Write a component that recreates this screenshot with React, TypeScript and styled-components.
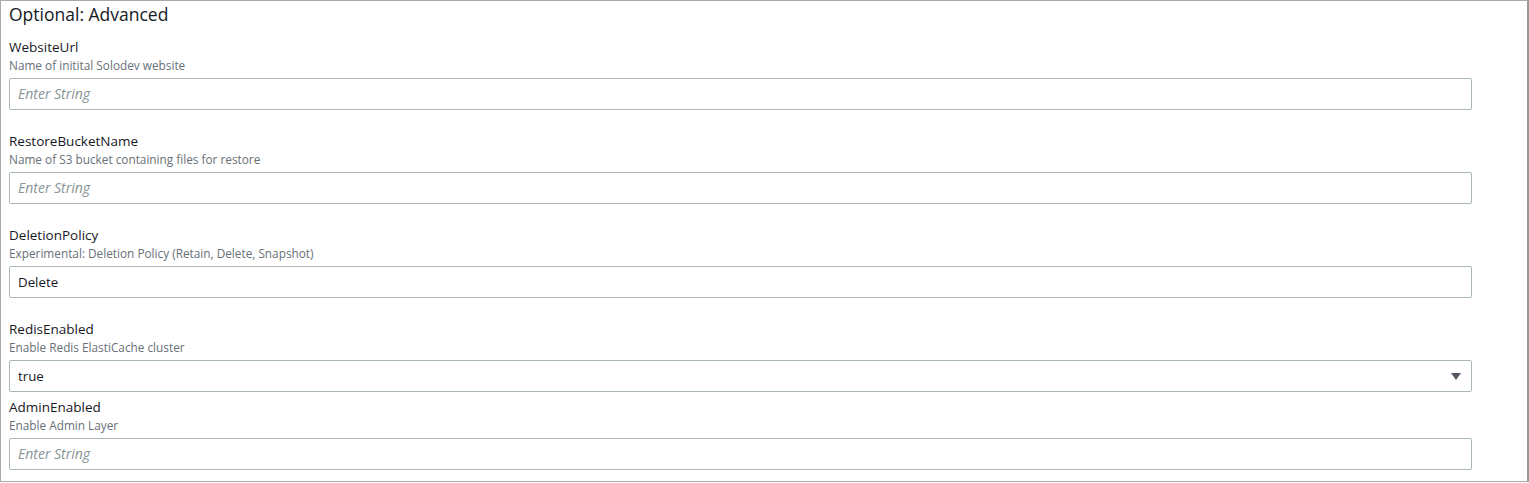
import React from 'react'
import styled, { createGlobalStyle } from 'styled-components'

const GlobalStyle = createGlobalStyle`
  html, body {
    margin: 0;
    padding: 0;
    background: #ffffff;
  }
  body {
    font-family: 'Open Sans', 'Liberation Sans', Arial, sans-serif;
    color: #16191f;
  }
`

const Panel = styled.section`
  box-sizing: border-box;
  width: 1529px;
  height: 482px;
  border: 1px solid #aaaaaa;
  border-right: 2px solid #999999;
  padding: 1px 55px 0 8px;
  display: flex;
  flex-direction: column;
`

const Title = styled.h2`
  margin: 0 0 11px;
  font-size: 17.5px;
  line-height: 24px;
  font-weight: 400;
  color: #16191f;
`

const Field = styled.div<{ $spaced?: boolean }>`
  display: flex;
  flex-direction: column;
  margin-bottom: ${({ $spaced }) => ($spaced ? '21px' : '5px')};
`

const Label = styled.label`
  font-size: 13.5px;
  line-height: 20px;
  color: #16191f;
`

const Description = styled.span`
  font-size: 11.8px;
  line-height: 16px;
  color: #687078;
`

const InputBox = styled.div`
  box-sizing: border-box;
  margin-top: 5px;
  height: 32px;
  width: 100%;
  border: 1px solid #aab7b8;
  border-radius: 2px;
  display: flex;
  align-items: center;
  justify-content: space-between;
  padding: 0 10px 1px 8px;
  background: #ffffff;
`

const Value = styled.span<{ $placeholder?: boolean }>`
  font-size: ${({ $placeholder }) => ($placeholder ? '14px' : '13.3px')};
  color: ${({ $placeholder }) => ($placeholder ? '#879596' : '#16191f')};
  font-style: ${({ $placeholder }) => ($placeholder ? 'italic' : 'normal')};
`

const Caret = styled.span`
  width: 0;
  height: 0;
  margin-top: 1px;
  border-left: 5.5px solid transparent;
  border-right: 5.5px solid transparent;
  border-top: 7px solid #545b64;
`

interface FieldDef {
  name: string
  help: string
  value?: string
  select?: boolean
}

const fields: FieldDef[] = [
  { name: 'WebsiteUrl', help: 'Name of initital Solodev website' },
  { name: 'RestoreBucketName', help: 'Name of S3 bucket containing files for restore' },
  { name: 'DeletionPolicy', help: 'Experimental: Deletion Policy (Retain, Delete, Snapshot)', value: 'Delete' },
  { name: 'RedisEnabled', help: 'Enable Redis ElastiCache cluster', value: 'true', select: true },
  { name: 'AdminEnabled', help: 'Enable Admin Layer' },
]

export default function App() {
  return (
    <>
      <GlobalStyle />
      <Panel>
        <Title>Optional: Advanced</Title>
        {fields.map((f) => (
          <Field key={f.name} $spaced={!f.select}>
            <Label>{f.name}</Label>
            <Description>{f.help}</Description>
            <InputBox>
              <Value $placeholder={!f.value}>{f.value || 'Enter String'}</Value>
              {f.select && <Caret />}
            </InputBox>
          </Field>
        ))}
      </Panel>
    </>
  )
}
